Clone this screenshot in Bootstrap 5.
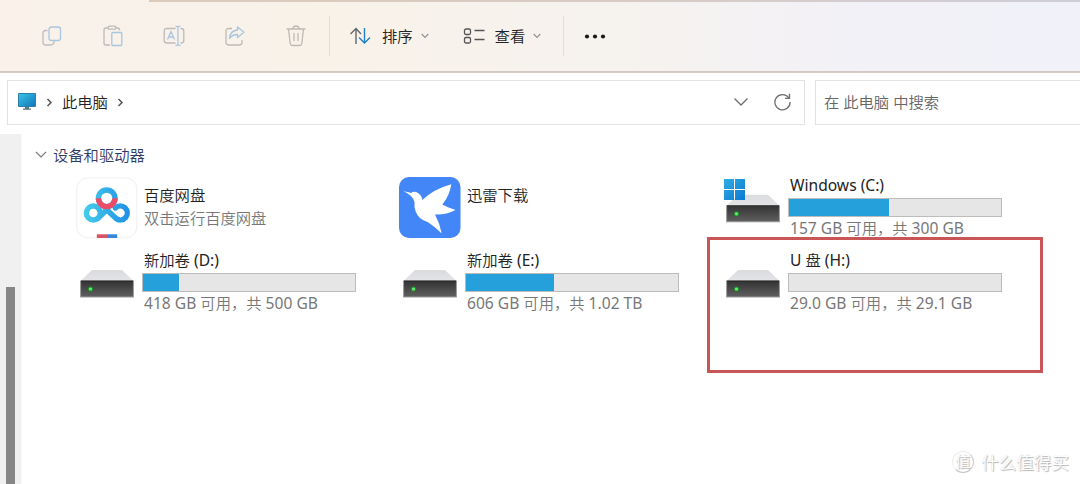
<!DOCTYPE html>
<html lang="zh-CN">
<head>
    <meta charset="UTF-8">
    <meta name="viewport" content="width=device-width, initial-scale=1.0">
    <title>此电脑</title>
    <link href="https://cdn.jsdelivr.net/npm/bootstrap@5.3.0/dist/css/bootstrap.min.css" rel="stylesheet">
    <style>
        body {
            height: 484px;
            font-family: "Noto Sans", "Noto Sans CJK SC", sans-serif;
            font-size: 15.3px;
            font-weight: 350;
            line-height: 20px;
            color: #222;
            background-color: #fff;
        }
        svg { display: block; flex-shrink: 0; }
        .latin { font-size: 15.6px; font-weight: 400; line-height: 1; }

        /* command bar */
        .toolbar {
            height: 73px;
            padding-left: 41px;
            background: linear-gradient(90deg, #f9f1ea 0, #f8f2e9 330px, #f6f2ee 620px, #f2f1f7 860px, #f1f1f9 100%);
            border-bottom: 2px solid #d3c9c4;
        }
        .tab-edge {
            top: 0;
            left: 149px;
            right: 0;
            height: 2px;
            background: linear-gradient(90deg, #dccabb, #d8cbc4 50%, #cfcdd8);
        }
        .tool-icons { gap: 39px; }
        .divider { width: 1px; height: 40px; background-color: #e3deda; }
        .divider-first { margin-left: 22px; }
        .sort-menu { margin-left: 20px; }
        .view-menu { margin-left: 34px; }
        .divider-last { margin-left: 22px; }
        .more-dots { margin-left: 20px; }

        /* address row */
        .address-row { padding: 7px 0 0 7px; gap: 10px; height: 61px; }
        .address-box { width: 798px; height: 45px; padding: 0 12px 1px 9px; border: 1px solid #e2e2e2; }
        .crumbs { gap: 9px; }
        .search-box { height: 45px; border: 1px solid #e2e2e2; border-right: 0; color: #666; padding: 0 0 1px 8px; }

        /* content */
        .side-strip { width: 22px; background-color: #f0f0f0; border-right: 1px solid #f8f8f8; padding: 153px 0 0 6px; }
        .side-thumb { width: 9px; background-color: #868686; }
        .group-title { color: #2f3a66; padding: 11px 0 0 13px; gap: 6px; }
        .drive-grid { display: grid; grid-template-columns: repeat(3, 323px); grid-auto-rows: 74.5px; padding-left: 55px; margin-top: 11px; }
        .tile-icon { width: 65px; overflow: visible; }
        .tile-name { padding-left: 2px; height: 20px; line-height: 20px; white-space: nowrap; margin-top: -1px; }
        .tile-info { padding-left: 2px; height: 20px; white-space: nowrap; color: #777; }
        .usage { width: 214px; height: 19px; margin: 3px 0 1px; background-color: #e6e6e6; border: 1px solid #bcbcbc; border-radius: 0; }
        .usage .progress-bar { background-color: #26a0da; }
        .app-text { padding-top: 10px; }
        .app-text .tile-info { margin-top: 3px; }

        /* overlays */
        .highlight { left: 707px; top: 237px; width: 336px; height: 136px; border: 3px solid #ca5557; }
        .watermark { left: 952px; top: 451px; gap: 7px; color: #fff; font-size: 17.6px; line-height: 22px; text-shadow: 1px 1px 1px #b4b4b4, 0 0 1px #ccc; }
        .watermark-seal { width: 22px; height: 22px; border: 1px solid #eee; border-bottom-color: #c4c4c4; border-right-color: #ccc; border-radius: 50%; font-size: 15px; line-height: 19px; text-align: center; }
    </style>
    <script src="https://cdn.jsdelivr.net/npm/bootstrap@5.3.0/dist/js/bootstrap.bundle.min.js"></script>
</head>
<body class="overflow-hidden position-relative d-flex flex-column">
    <!-- shared symbols -->
    <svg width="0" height="0" class="position-absolute">
        <defs>
            <linearGradient id="driveFront" x1="0" y1="0" x2="0" y2="1">
                <stop offset="0" stop-color="#333"/>
                <stop offset="1" stop-color="#606060"/>
            </linearGradient>
            <linearGradient id="driveTop" x1="0" y1="0" x2="0" y2="1">
                <stop offset="0" stop-color="#dadbdd"/>
                <stop offset="1" stop-color="#e4e4e8"/>
            </linearGradient>
            <linearGradient id="winBlue" x1="0" y1="0" x2="1" y2="1">
                <stop offset="0" stop-color="#2faee5"/>
                <stop offset="1" stop-color="#0b78cf"/>
            </linearGradient>
            <symbol id="drive" viewBox="0 0 54 29">
                <path d="M12 .5H42L53.500 11.500H.5Z" fill="url(#driveTop)"/>
                <rect x=".6" y="11.500" width="52.800" height="16" fill="url(#driveFront)" stroke="#999" stroke-width="1"/>
                <rect x="1" y="11" width="52" height="1.500" fill="#2c2c2c"/>
                <circle cx="10.500" cy="19.500" r="2.600" fill="#258a32"/>
                <circle cx="10.500" cy="19.500" r="1.600" fill="#5cf06a"/>
            </symbol>
        </defs>
    </svg>

    <header class="toolbar position-relative d-flex align-items-center flex-shrink-0">
        <div class="tab-edge position-absolute"></div>
        <div class="tool-icons d-flex align-items-center">
            <svg width="22" height="22" viewBox="0 0 22 22" fill="none" stroke-width="1.300">
                <path d="M6.500 5.500H4.500Q2 5.500 2 8V17.500Q2 20 4.500 20H9.500Q13 20 13.300 16" stroke="#bdbdbf"/>
                <rect x="8" y="2" width="11.500" height="13.500" rx="2.500" stroke="#a9c6df"/>
            </svg>
            <svg width="22" height="22" viewBox="0 0 22 22" fill="none" stroke-width="1.300">
                <path d="M6.500 3H4Q2 3 2 5V18Q2 20 4 20H8M13.500 3H15.500Q17.500 3 17.500 5V5.500" stroke="#bdbab7"/>
                <rect x="6" y="1.200" width="8" height="3" rx="1.500" stroke="#bdbab7"/>
                <rect x="9.800" y="7.500" width="10" height="13" rx="1" stroke="#a9c6df"/>
            </svg>
            <svg width="22" height="22" viewBox="0 0 22 22" fill="none" stroke-width="1.300">
                <path d="M12.500 3.500H4Q1.200 3.500 1.200 6V15.500Q1.200 18 4 18H12.500M17.500 3.500H18Q20.800 3.500 20.800 6V15.500Q20.800 18 18 18H17.500" stroke="#bdbab7"/>
                <path d="M4.500 14.500L8 6.500L11.500 14.500M5.800 12H10.200M14.900 1.500V20M12.500 1.200Q14.900 1.200 14.900 2.500Q14.900 1.200 17.500 1.200M12.500 20.500Q14.900 20.500 14.900 19Q14.900 20.500 17.500 20.500" stroke="#a9c6df"/>
            </svg>
            <svg width="22" height="22" viewBox="0 0 22 22" fill="none" stroke-width="1.300" stroke-linejoin="round">
                <path d="M8 3.500H5Q2 3.500 2 6V17.500Q2 20 5 20H15Q18 20 18 17.500V15" stroke="#bdbab7"/>
                <path d="M13.500 2L20 7.300L13.500 12.600V9.500Q8.500 9.300 5.500 13.500Q6.200 5.600 13.500 5Z" stroke="#a9c6df"/>
            </svg>
            <svg width="22" height="22" viewBox="0 0 22 22" fill="none" stroke="#bdb9b4" stroke-width="1.300" stroke-linecap="round">
                <path d="M2 4H20M7.800 4Q8 1 11 1Q14 1 14.200 4M3.500 4L5.200 18.500Q5.500 20.500 7.500 20.500H14.500Q16.500 20.500 16.800 18.500L18.500 4M9 8.500V15.500M13 8.500V15.500"/>
            </svg>
        </div>
        <div class="divider divider-first"></div>
        <div class="sort-menu d-flex align-items-center">
            <svg width="24" height="20" viewBox="0 0 24 20" fill="none" stroke-width="1.400">
                <path d="M6 18V3M.5 8L6 2.500L11 8" stroke="#666"/>
                <path d="M14.500 2V17M9 11.500L14.500 17L20 11.500" stroke="#1f80c9"/>
            </svg>
            <span class="ms-2 ps-0">排序</span>
            <svg class="ms-2" width="8" height="6" viewBox="0 0 8 6" fill="none" stroke="#919191" stroke-width="1.100"><path d="M.7 1L4 4.500L7.300 1"/></svg>
        </div>
        <div class="view-menu d-flex align-items-center">
            <svg width="24" height="20" viewBox="0 0 24 20" fill="none" stroke="#555" stroke-width="1.300">
                <rect x="1.500" y="3" width="6" height="5.500" rx="1.500"/>
                <rect x="1.500" y="11.500" width="6" height="5.500" rx="1.500"/>
                <path d="M11.500 4.500H21.500M11.500 13.500H21.500"/>
            </svg>
            <span class="ms-2">查看</span>
            <svg class="ms-2" width="8" height="6" viewBox="0 0 8 6" fill="none" stroke="#919191" stroke-width="1.100"><path d="M.7 1L4 4.500L7.300 1"/></svg>
        </div>
        <div class="divider divider-last"></div>
        <svg class="more-dots" width="24" height="6" viewBox="0 0 24 6" fill="#1b1b1b">
            <circle cx="3" cy="3.500" r="2.100"/><circle cx="11" cy="3.500" r="2.100"/><circle cx="19" cy="3.500" r="2.100"/>
        </svg>
    </header>

    <div class="address-row d-flex flex-shrink-0">
        <div class="address-box d-flex align-items-center justify-content-between">
            <div class="crumbs d-flex align-items-center">
                <svg width="20" height="18" viewBox="0 0 20 18">
                    <linearGradient id="screenBlue" x1="0" y1="0" x2="1" y2="1">
                        <stop offset="0" stop-color="#38c4e3"/>
                        <stop offset="1" stop-color="#1277bd"/>
                    </linearGradient>
                    <rect x="1" y="0" width="18" height="14" rx="1" fill="#2b7fae"/>
                    <rect x="2" y="1" width="16" height="12" fill="url(#screenBlue)"/>
                    <path d="M8 14H12V15.500H14V16.700H6V15.500H8Z" fill="#5f7688"/>
                </svg>
                <svg width="7" height="9" viewBox="0 0 7 9" fill="none" stroke="#555" stroke-width="1.500"><path d="M1.500 1L5 4.500L1.500 8"/></svg>
                <span>此电脑</span>
                <svg width="7" height="9" viewBox="0 0 7 9" fill="none" stroke="#555" stroke-width="1.500"><path d="M1.500 1L5 4.500L1.500 8"/></svg>
            </div>
            <div class="d-flex align-items-center gap-4">
                <svg width="16" height="10" viewBox="0 0 16 10" fill="none" stroke="#6d6d6d" stroke-width="1.300"><path d="M1.500 1.500L8 8L14.500 1.500"/></svg>
                <svg width="19" height="18" viewBox="0 0 19 18" fill="none" stroke="#6d6d6d" stroke-width="1.300">
                    <path d="M15.800 5A7.600 7.600 0 1 0 17.100 9"/>
                    <path d="M16.500 .8V5.300H12"/>
                </svg>
            </div>
        </div>
        <div class="search-box d-flex align-items-center flex-grow-1">在 此电脑 中搜索</div>
    </div>

    <main class="d-flex flex-grow-1">
        <div class="side-strip d-flex flex-shrink-0">
            <div class="side-thumb"></div>
        </div>
        <div>
            <div class="group-title d-flex align-items-center">
                <svg width="12" height="8" viewBox="0 0 12 8" fill="none" stroke="#7d7d7d" stroke-width="1.200"><path d="M1 1L6 6L11 1"/></svg>
                <span>设备和驱动器</span>
            </div>
            <div class="drive-grid">
                <div class="d-flex">
                    <svg class="tile-icon" width="65" height="66" viewBox="0 0 65 66" fill="none">
                        <linearGradient id="cloudBlue" gradientUnits="userSpaceOnUse" x1="7" y1="0" x2="53" y2="0">
                            <stop offset="0" stop-color="#45cdea"/>
                            <stop offset="1" stop-color="#1f8fe6"/>
                        </linearGradient>
                        <rect x="-.2" y="1.800" width="60" height="60" rx="11" fill="#fff" stroke="#efefef"/>
                        <g stroke="url(#cloudBlue)" stroke-width="5.400" stroke-linecap="round">
                            <circle cx="16.300" cy="37" r="7"/>
                            <path d="M21 42.300L30 33.500"/>
                            <path d="M29 33L39 42.500A7 7 0 1 0 38.300 32"/>
                            <circle cx="29.700" cy="22.300" r="8.300"/>
                        </g>
                        <path d="M21.400 22.300A8.300 8.300 0 0 0 38 22.300" stroke="#ed4c68" stroke-width="5.400"/>
                        <path d="M19.800 58.300H30V62H19.800Z" fill="#d65368"/>
                        <path d="M30 58.300H40.200V62H30Z" fill="#3686dc"/>
                    </svg>
                    <div class="app-text">
                        <div class="tile-name">百度网盘</div>
                        <div class="tile-info">双击运行百度网盘</div>
                    </div>
                </div>
                <div class="d-flex">
                    <svg class="tile-icon" width="65" height="66" viewBox="0 0 65 66">
                        <rect x="-1" y="1" width="61.500" height="61" rx="10" fill="#4386f7"/>
                        <path d="M3.300 15.300Q8 16 11 17Q14 14.500 18 17Q22 19.500 22.300 24Q34 13 51.300 8.300Q49.500 20 42.300 28.500Q47 31 55.500 34Q46 39 35 38.500Q40 48 41.700 57.500Q34 50 27.500 46Q18 43 15.500 35Q14 31 14.500 26Q12.500 19 3.300 15.300Z" fill="#fff"/>
                    </svg>
                    <div class="app-text">
                        <div class="tile-name">迅雷下载</div>
                    </div>
                </div>
                <div class="d-flex">
                    <svg class="tile-icon" width="65" height="66" viewBox="0 0 65 66">
                        <use href="#drive" x="3" y="18.300" width="54" height="29"/>
                        <path d="M1 3H11V13H1ZM12 3H22V13H12ZM1 14H11V24H1ZM12 14H22V24H12Z" fill="url(#winBlue)"/>
                    </svg>
                    <div>
                        <div class="tile-name"><span class="latin">Windows (C:)</span></div>
                        <div class="usage progress"><div class="progress-bar" style="width: 47%"></div></div>
                        <div class="tile-info"><span class="latin">157 GB </span>可用，共<span class="latin"> 300 GB</span></div>
                    </div>
                </div>
                <div class="d-flex">
                    <svg class="tile-icon" width="65" height="66" viewBox="0 0 65 66">
                        <use href="#drive" x="3" y="18.500" width="54" height="29"/>
                    </svg>
                    <div>
                        <div class="tile-name">新加卷<span class="latin"> (D:)</span></div>
                        <div class="usage progress"><div class="progress-bar" style="width: 17%"></div></div>
                        <div class="tile-info"><span class="latin">418 GB </span>可用，共<span class="latin"> 500 GB</span></div>
                    </div>
                </div>
                <div class="d-flex">
                    <svg class="tile-icon" width="65" height="66" viewBox="0 0 65 66">
                        <use href="#drive" x="3" y="18.500" width="54" height="29"/>
                    </svg>
                    <div>
                        <div class="tile-name">新加卷<span class="latin"> (E:)</span></div>
                        <div class="usage progress"><div class="progress-bar" style="width: 41.500%"></div></div>
                        <div class="tile-info"><span class="latin">606 GB </span>可用，共<span class="latin"> 1.02 TB</span></div>
                    </div>
                </div>
                <div class="d-flex">
                    <svg class="tile-icon" width="65" height="66" viewBox="0 0 65 66">
                        <use href="#drive" x="3" y="18.500" width="54" height="29"/>
                    </svg>
                    <div>
                        <div class="tile-name"><span class="latin">U </span>盘<span class="latin"> (H:)</span></div>
                        <div class="usage progress"><div class="progress-bar" style="width: 0%"></div></div>
                        <div class="tile-info"><span class="latin">29.0 GB </span>可用，共<span class="latin"> 29.1 GB</span></div>
                    </div>
                </div>
            </div>
        </div>
    </main>

    <div class="highlight position-absolute"></div>
    <div class="watermark position-absolute d-flex align-items-center">
        <span class="watermark-seal">值</span>
        <span>什么值得买</span>
    </div>
</body>
</html>
